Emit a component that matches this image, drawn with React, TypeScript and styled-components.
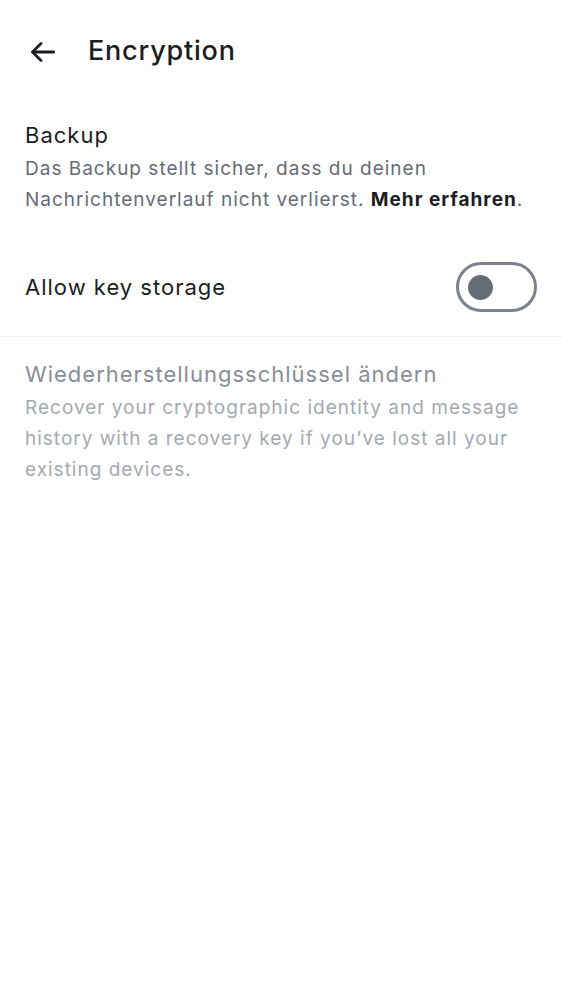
import React from "react";
import styled, { createGlobalStyle } from "styled-components";

const Global = createGlobalStyle`
  html, body { margin: 0; padding: 0; background: #ffffff; }
  body { font-family: Inter, Roboto, "Noto Sans", sans-serif; -webkit-font-smoothing: antialiased; }
`;

const Page = styled.div`
  width: 562px;
  min-height: 1000px;
  background: #ffffff;
  display: flex;
  flex-direction: column;
`;

const TopBar = styled.header`
  height: 100px;
  display: flex;
  align-items: center;
  padding: 0 0 0 28px;
  gap: 30px;
  box-sizing: border-box;
`;

const BackButton = styled.button`
  border: 0;
  background: none;
  padding: 0;
  margin-top: 3px;
  width: 30px;
  height: 30px;
  display: flex;
  align-items: center;
  justify-content: center;
  color: #1b1d22;
`;

const Title = styled.h1`
  margin: 0;
  font-size: 27px;
  font-weight: 500;
  color: #1b1d22;
  letter-spacing: 0.8px;
`;

const Section = styled.div<{ $pt: number; $pb: number }>`
  padding: ${(p) => p.$pt}px 25px ${(p) => p.$pb}px 25px;
  display: flex;
  flex-direction: column;
  gap: 3px;
`;

const ItemTitle = styled.div<{ $disabled?: boolean }>`
  font-size: 22px;
  line-height: 30px;
  letter-spacing: 1px;
  color: ${(p) => (p.$disabled ? "#878e98" : "#1b1d22")};
`;

const ItemText = styled.div<{ $disabled?: boolean }>`
  font-size: 19px;
  line-height: 31px;
  letter-spacing: 1px;
  color: ${(p) => (p.$disabled ? "#a3a9b1" : "#656c76")};
  b { color: #1b1d22; font-weight: 700; }
`;

const ToggleRow = styled.div`
  display: flex;
  align-items: center;
  justify-content: space-between;
  padding: 0 25px;
  height: 98px;
  border-bottom: 1px solid #eff0f3;
`;

const Switch = styled.div`
  width: 81px;
  height: 50px;
  box-sizing: border-box;
  border: 3px solid #7b828c;
  border-radius: 25px;
  display: flex;
  align-items: center;
  padding-left: 9px;
`;

const Thumb = styled.div`
  width: 25px;
  height: 25px;
  border-radius: 50%;
  background: #656c76;
`;

export default function App() {
  return (
    <Page>
      <Global />
      <TopBar>
        <BackButton aria-label="Back">
          <svg width="24" height="20" viewBox="0 0 24 20" fill="none" stroke="currentColor" strokeWidth="2.8" strokeLinecap="round" strokeLinejoin="round">
            <path d="M23 10H2" />
            <path d="M10 1.5L1.5 10L10 18.5" />
          </svg>
        </BackButton>
        <Title>Encryption</Title>
      </TopBar>
      <Section $pt={20} $pb={23}>
        <ItemTitle>Backup</ItemTitle>
        <ItemText>
          Das Backup stellt sicher, dass du deinen Nachrichtenverlauf nicht verlierst. <b>Mehr erfahren</b>.
        </ItemText>
      </Section>
      <ToggleRow>
        <ItemTitle>Allow key storage</ItemTitle>
        <Switch>
          <Thumb />
        </Switch>
      </ToggleRow>
      <Section $pt={22} $pb={20}>
        <ItemTitle $disabled>Wiederherstellungsschlüssel ändern</ItemTitle>
        <ItemText $disabled>
          Recover your cryptographic identity and message history with a recovery key if you’ve lost all your existing devices.
        </ItemText>
      </Section>
    </Page>
  );
}
